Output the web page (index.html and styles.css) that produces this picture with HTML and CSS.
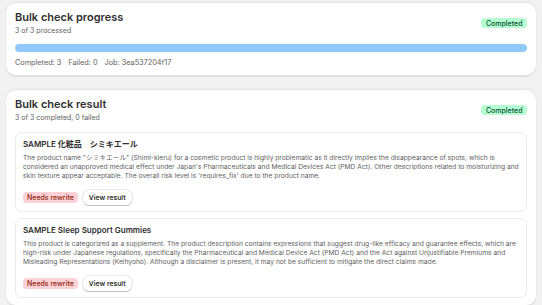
FILE: index.html
```html
<!DOCTYPE html>
<html lang="en">
<head>
<meta charset="utf-8">
<title>Bulk check</title>
<link rel="stylesheet" href="styles.css">
</head>
<body>
<main class="page">
  <section class="card">
    <div class="card-head">
      <div>
        <h2 class="card-title">Bulk check progress</h2>
        <p class="card-sub">3 of 3 processed</p>
      </div>
      <span class="badge badge-success">Completed</span>
    </div>
    <div class="progress"><div class="progress-fill" style="width:100%"></div></div>
    <div class="stats">
      <span>Completed: 3</span>
      <span>Failed: 0</span>
      <span>Job: 3ea537204f17</span>
    </div>
  </section>

  <section class="card">
    <div class="card-head">
      <div>
        <h2 class="card-title">Bulk check result</h2>
        <p class="card-sub">3 of 3 completed, 0 failed</p>
      </div>
      <span class="badge badge-success">Completed</span>
    </div>
    <div class="results">
      <article class="result">
        <h3 class="result-title">SAMPLE 化粧品　シミキエール</h3>
        <p class="result-text">The product name "シミキエール" (Shimi-kieru) for a cosmetic product is highly problematic as it directly implies the disappearance of spots, which is considered an unapproved medical effect under Japan's Pharmaceuticals and Medical Devices Act (PMD Act). Other descriptions related to moisturizing and skin texture appear acceptable. The overall risk level is 'requires_fix' due to the product name.</p>
        <div class="result-actions">
          <span class="badge badge-critical">Needs rewrite</span>
          <button class="btn">View result</button>
        </div>
      </article>
      <article class="result">
        <h3 class="result-title">SAMPLE Sleep Support Gummies</h3>
        <p class="result-text">This product is categorized as a supplement. The product description contains expressions that suggest drug-like efficacy and guarantee effects, which are high-risk under Japanese regulations, specifically the Pharmaceutical and Medical Device Act (PMD Act) and the Act against Unjustifiable Premiums and Misleading Representations (Keihyoho). Although a disclaimer is present, it may not be sufficient to mitigate the direct claims made.</p>
        <div class="result-actions">
          <span class="badge badge-critical">Needs rewrite</span>
          <button class="btn">View result</button>
        </div>
      </article>
    </div>
  </section>
</main>
</body>
</html>
```

FILE: styles.css
```css
* { box-sizing: border-box; }
html, body { margin: 0; padding: 0; }
body {
  background: #f1f1f1;
  font-family: Inter, "Noto Sans CJK JP", sans-serif;
  color: #303030;
}
.page {
  display: flex;
  flex-direction: column;
  gap: 13px;
  padding: 2px 6px 0 6px;
}
.card {
  background: #ffffff;
  border-radius: 10px;
  box-shadow: 0 1px 0 rgba(26,26,26,0.07), 0 1px 0 rgba(204,204,204,0.5) inset, 0 -1px 0 rgba(0,0,0,0.1) inset, 0 0 0 1px rgba(0,0,0,0.02);
  padding: 8px 9px 8px 9px;
}
.card-head {
  display: flex;
  justify-content: space-between;
  align-items: center;
}
.card-title {
  margin: 0;
  font-size: 11px;
  line-height: 15px;
  font-weight: 600;
  color: #303030;
}
.card-sub {
  margin: 1px 0 0 0;
  font-size: 7px;
  line-height: 10px;
  color: #616161;
}
.badge {
  display: inline-flex;
  align-items: center;
  height: 10px;
  padding: 0 4.5px;
  border-radius: 4px;
  font-size: 7px;
  font-weight: 500;
}
.badge-success {
  background: #b4fed2;
  color: #0c5132;
}
.badge-critical {
  background: #fed1d7;
  color: #8e1f0b;
  height: 11px;
  padding: 0 4px;
  font-size: 7px;
}
.progress {
  margin-top: 8px;
  height: 8px;
  border-radius: 4px;
  background: #e3e3e3;
  overflow: hidden;
}
.progress-fill {
  height: 100%;
  background: #91c8fa;
  border-radius: 4px;
}
.stats {
  margin-top: 6px;
  display: flex;
  gap: 7px;
  font-size: 7.3px;
  line-height: 10px;
  color: #616161;
}
.results {
  margin-top: 9px;
  display: flex;
  flex-direction: column;
  gap: 6px;
}
.result {
  border: 1px solid #ebebeb;
  border-radius: 7px;
  padding: 6px 7px 6px 7px;
}
.result-title {
  margin: 0;
  font-size: 8px;
  line-height: 11px;
  font-weight: 600;
  color: #303030;
}
.result-text {
  margin: 3.5px 0 0 0;
  font-size: 6.7px;
  line-height: 9px;
  color: #616161;
}
.result-actions {
  margin-top: 9.5px;
  display: flex;
  align-items: center;
  gap: 5px;
}
.btn {
  font-family: inherit;
  height: 15px;
  padding: 0 6px;
  font-size: 6.8px;
  font-weight: 600;
  color: #303030;
  background: #ffffff;
  border: none;
  border-radius: 6px;
  box-shadow: 0 0 0 0.5px #cfcfcf, 0 1px 0 #b5b5b5;
}
```
